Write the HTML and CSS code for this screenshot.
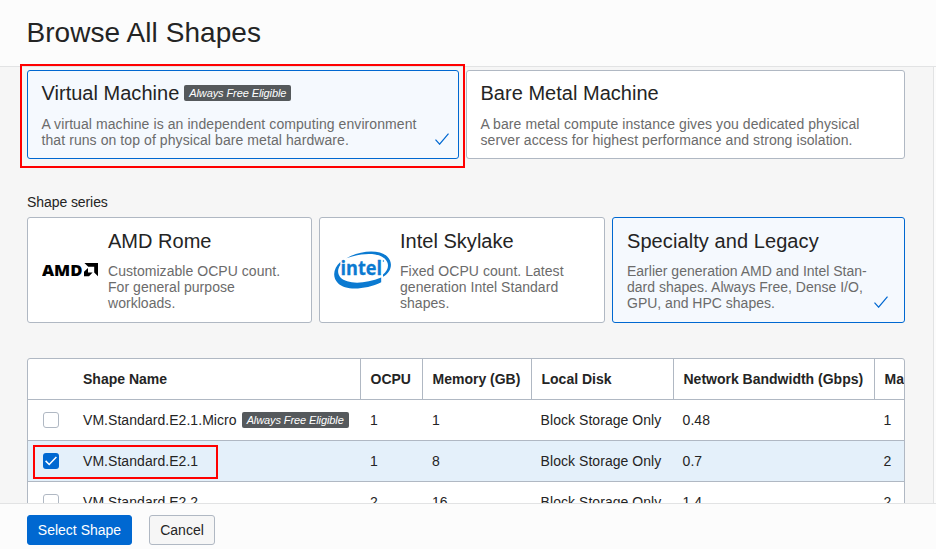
FILE: index.html
```html
<!DOCTYPE html>
<html lang="en">
<head>
<meta charset="utf-8">
<title>Browse All Shapes</title>
<link rel="stylesheet" href="styles.css">
</head>
<body>
<div class="dialog">
  <header class="dialog-header"><h1>Browse All Shapes</h1></header>
  <main class="dialog-body">
    <section class="machines">
      <article class="card selected">
        <h2>Virtual Machine <span class="badge">Always Free Eligible</span></h2>
        <p>A virtual machine is an independent computing environment<br>that runs on top of physical bare metal hardware.</p>
        <svg class="tick" viewBox="0 0 14 12"><path d="M.5 6.7 4.6 11.2 13.5.7"/></svg>
      </article>
      <article class="card">
        <h2>Bare Metal Machine</h2>
        <p>A bare metal compute instance gives you dedicated physical<br>server access for highest performance and strong isolation.</p>
      </article>
    </section>
    <div class="series-label">Shape series</div>
    <section class="series">
      <article class="card with-logo">
        <svg class="logo" viewBox="0 0 58 40">
          <text class="amd-word" x="0" y="25.6" textLength="40.5" lengthAdjust="spacingAndGlyphs">AMD</text>
          <path d="M42.4 13H56V26.2L52.2 22.4V16.8H46.2ZM46 18V22.6H50.6L47 26.2H42V21.8Z"/>
        </svg>
        <div>
          <h2>AMD Rome</h2>
          <p>Customizable OCPU count.<br>For general purpose<br>workloads.</p>
        </div>
      </article>
      <article class="card with-logo">
        <svg class="logo intel" viewBox="0 0 58 40">
          <path d="M12.5 8.2C26 .4 45-1 53.2 6.4 59.8 12.6 57.2 22.8 49 26.8V24.4C54.6 20.2 56 13.4 50.6 8.4 43 1.8 26 3.1 12.5 8.2ZM6.3 12V14.9C3.3 19 3.4 24.2 6.5 27.6 13 34.4 31 34.2 47.2 27.6V32.2C32 39.5 11.8 41.2 4 33.2-2.4 26.6-.2 17.8 6.3 12Z"/>
          <text class="intel-word" x="6.6" y="25" textLength="41.5" lengthAdjust="spacingAndGlyphs">intel</text>
          <circle cx="49.4" cy="11" r=".7"/>
        </svg>
        <div>
          <h2>Intel Skylake</h2>
          <p>Fixed OCPU count. Latest<br>generation Intel Standard<br>shapes.</p>
        </div>
      </article>
      <article class="card selected">
        <h2>Specialty and Legacy</h2>
        <p>Earlier generation AMD and Intel Stan-<br>dard shapes. Always Free, Dense I/O,<br>GPU, and HPC shapes.</p>
        <svg class="tick" viewBox="0 0 14 12"><path d="M.5 6.7 4.6 11.2 13.5.7"/></svg>
      </article>
    </section>
    <section class="table">
      <div class="row head"><div></div><div>Shape Name</div><div>OCPU</div><div>Memory (GB)</div><div>Local Disk</div><div>Network Bandwidth (Gbps)</div><div>Ma</div></div>
      <div class="row"><div><span class="check"></span></div><div>VM.Standard.E2.1.Micro <span class="badge">Always Free Eligible</span></div><div>1</div><div>1</div><div>Block Storage Only</div><div>0.48</div><div>1</div></div>
      <div class="row active"><div><span class="check on"><svg viewBox="0 0 16 16"><path d="M2.6 7.9 6.2 11.5 13.4 3.9"/></svg></span></div><div>VM.Standard.E2.1</div><div>1</div><div>8</div><div>Block Storage Only</div><div>0.7</div><div>2</div></div>
      <div class="row"><div><span class="check"></span></div><div>VM.Standard.E2.2</div><div>2</div><div>16</div><div>Block Storage Only</div><div>1.4</div><div>2</div></div>
    </section>
  </main>
  <footer class="dialog-footer">
    <button class="btn primary">Select Shape</button>
    <button class="btn">Cancel</button>
  </footer>
  <div class="mark mark-machine"></div>
  <div class="mark mark-row"></div>
</div>
</body>
</html>
```
FILE: styles.css
```css
* { box-sizing: border-box; }
body {
  margin: 0;
  color: #242424;
  font: 14px/16px "Liberation Sans", Arial, sans-serif;
}
h1, h2, p { margin: 0; font-weight: 400; white-space: nowrap; }
.dialog {
  position: relative;
  display: flex;
  flex-direction: column;
  width: 936px;
  height: 549px;
  overflow: hidden;
  background: #fcfcfc;
}
.dialog-header {
  flex: 0 0 67px;
  padding: 16px 26.5px 0;
  border-bottom: 1px solid #e2e3e4;
}
.dialog-header h1 { font-size: 28px; line-height: 34px; letter-spacing: 0.06px; }
.dialog-body {
  flex: 1;
  min-height: 0;
  width: 934px;
  padding: 3px 28px 0 27px;
  overflow: hidden;
  background: #f6f6f6;
  border-right: 1px solid #e2e3e4;
}
.machines { display: grid; grid-template-columns: 432px 439px; gap: 7px; }
.card {
  position: relative;
  height: 89px;
  padding: 11px 14px 0;
  background: #fff;
  border: 1px solid #b0b8c3;
  border-radius: 3px;
}
.card.selected { background: #f5f9fe; border-color: #0068d1; }
.card h2 { display: flex; align-items: center; gap: 5px; font-size: 20px; line-height: 24px; letter-spacing: 0.02px; }
.card p { margin-top: 10px; color: #6b6b6b; letter-spacing: 0.04px; }
.machines .card { padding: 10px 13.5px 0; }
.machines .card p { margin-top: 11px; letter-spacing: 0.08px; }
.tick { position: absolute; right: 9px; bottom: 13px; width: 14px; height: 12px; }
.series .tick { right: 16px; bottom: 14px; }
.tick path { fill: none; stroke: #0068d1; stroke-width: 1.2; }
.series .selected h2 { letter-spacing: 0.08px; }
.series .selected p { letter-spacing: 0; }
.badge {
  display: inline-block;
  width: 107px;
  height: 16px;
  padding-left: 5px;
  border-radius: 2px;
  background: #55595c;
  color: #fff;
  font-size: 11px;
  font-style: italic;
  line-height: 16px;
  letter-spacing: -0.1px;
}
.series-label { margin-top: 35px; line-height: 16px; letter-spacing: -0.08px; }
.series { display: grid; grid-template-columns: 285px 286px 293px; gap: 7px; margin-top: 7px; }
.series .card { height: 106px; }
.with-logo { display: flex; gap: 8px; }
.logo { width: 58px; height: 40px; margin-top: 21px; }
.intel { fill: #0b7ad1; }
.amd-word { font: 800 16px "Open Sans", sans-serif; }
.intel-word { font: bold 20px "Open Sans", sans-serif; stroke: #0b7ad1; stroke-width: 0.3; }
.table {
  margin-top: 35px;
  background: #fff;
  border: 1px solid #b0b8c3;
  border-radius: 3px 3px 0 0;
  overflow: hidden;
}
.row {
  display: grid;
  grid-template-columns: 46px 287px 62px 109px 142px 201px 80px;
  height: 41px;
  border-bottom: 1px solid #b0b8c3;
  white-space: nowrap;
  letter-spacing: 0.05px;
}
.row > div { display: flex; align-items: center; gap: 5px; padding-left: 9px; }
.row > div:first-child { padding-left: 15px; }
.head { font-weight: 700; letter-spacing: 0; }
.head > div:nth-child(n+2) { border-right: 1px solid #b0b8c3; }
.head > div:nth-child(n+3) { padding-left: 9.5px; }
.row:not(.head) > div:nth-child(n+5) { padding-left: 8.6px; }
.active { background: #e4f0fa; }
.check { width: 16px; height: 16px; border: 1px solid #b0b8c3; border-radius: 3px; background: #fff; }
.check.on { border: 0; background: #0068d1; }
.check svg { display: block; width: 16px; height: 16px; fill: none; stroke: #fff; stroke-width: 1.5; }
.dialog-footer {
  flex: 0 0 46px;
  display: flex;
  gap: 17px;
  padding: 11px 27px 0;
  border-top: 1px solid #e2e3e4;
}
.btn {
  width: 66px;
  height: 30px;
  padding: 0;
  border: 1px solid #b0b8c3;
  border-radius: 3px;
  background: #f6f6f6;
  color: #242424;
  font: inherit;
}
.btn.primary { width: 105px; border-color: #0068d1; background: #0068d1; color: #fff; }
.mark { position: absolute; border: 2px solid #f00; pointer-events: none; }
.mark-machine { left: 20px; top: 64px; width: 445px; height: 104px; }
.mark-row { left: 33px; top: 445px; width: 185px; height: 34px; }
```
